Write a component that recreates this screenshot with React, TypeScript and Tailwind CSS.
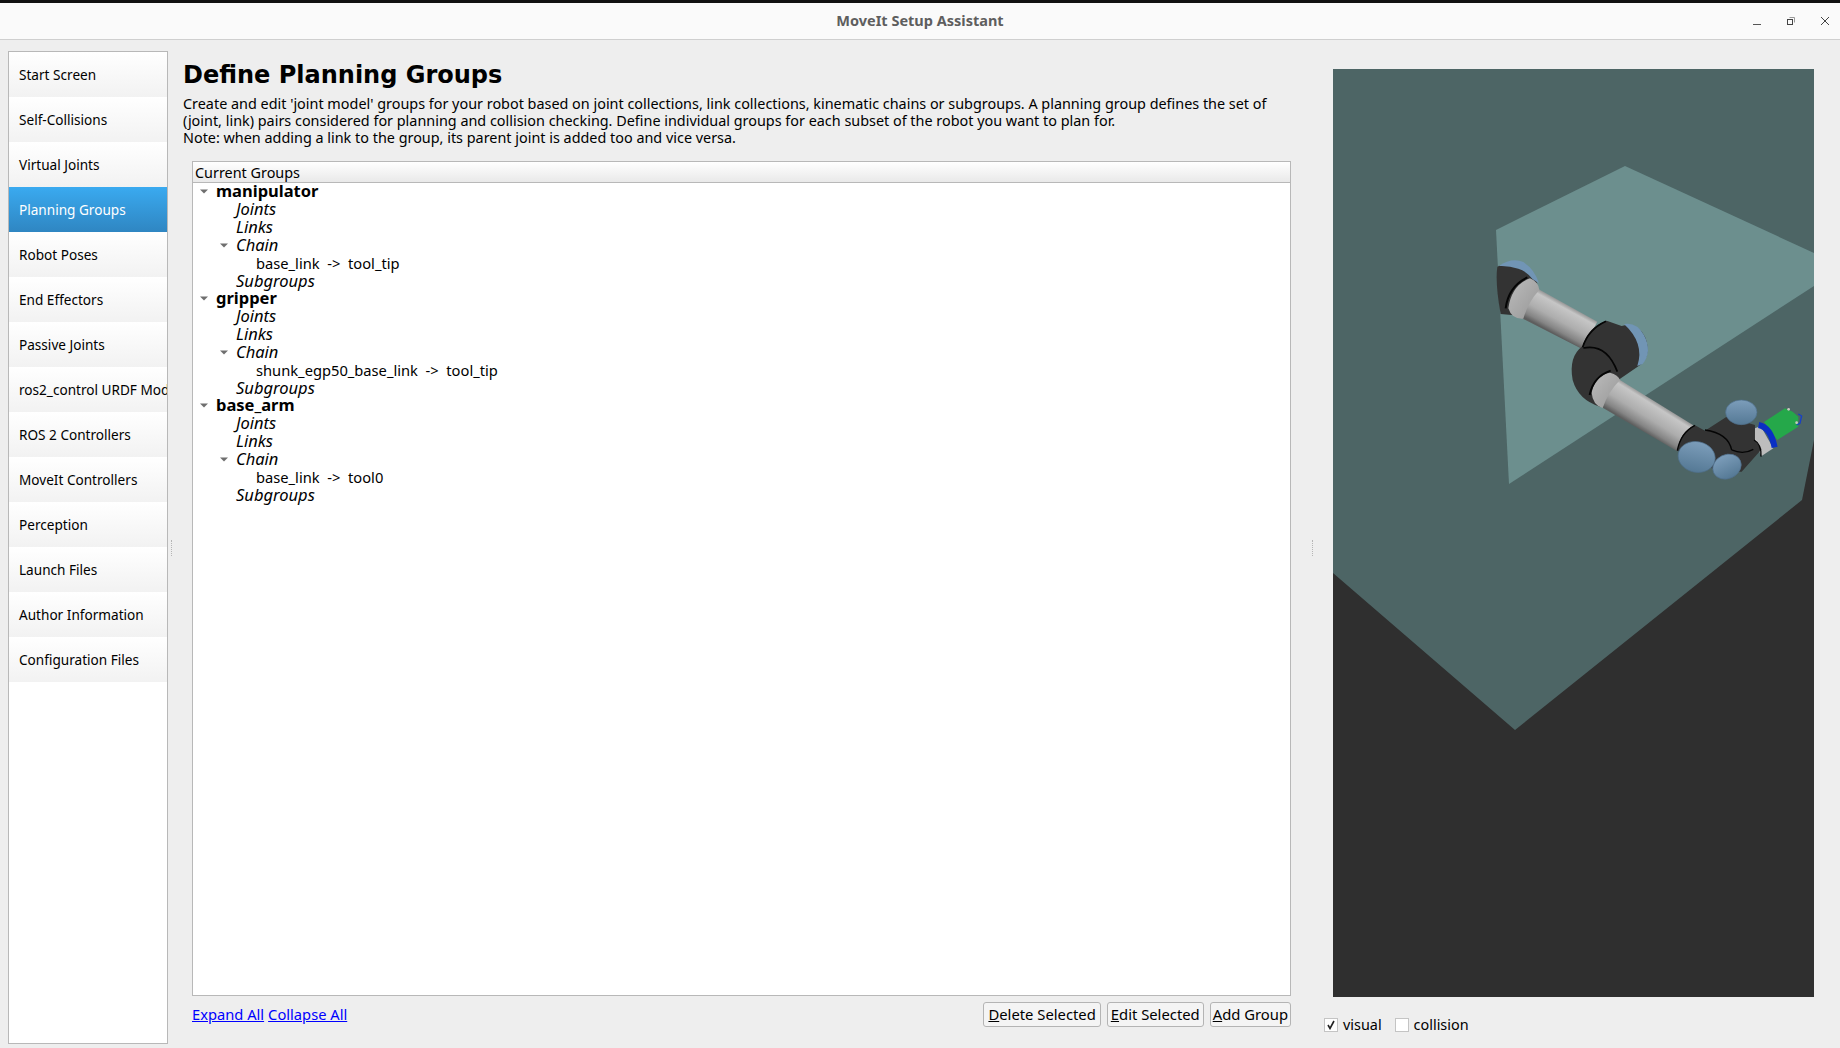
const NAV_ITEMS = [
  "Start Screen",
  "Self-Collisions",
  "Virtual Joints",
  "Planning Groups",
  "Robot Poses",
  "End Effectors",
  "Passive Joints",
  "ros2_control URDF Modules",
  "ROS 2 Controllers",
  "MoveIt Controllers",
  "Perception",
  "Launch Files",
  "Author Information",
  "Configuration Files",
];

const GROUPS = [
  { name: "manipulator", chain: "base_link  ->  tool_tip" },
  { name: "gripper", chain: "shunk_egp50_base_link  ->  tool_tip" },
  { name: "base_arm", chain: "base_link  ->  tool0" },
];

function Arrow() {
  return (
    <svg width="8" height="5" viewBox="0 0 8 5" className="shrink-0">
      <path d="M0 0.5 L8 0.5 L4 4.5 Z" fill="#6f6f6f" />
    </svg>
  );
}

function Splitter() {
  return (
    <div className="flex h-full items-center">
      <div className="h-[16px] w-0 border-l border-dotted border-[#b5b5b5]" />
    </div>
  );
}

function Group({ name, chain }: { name: string; chain: string }) {
  return (
    <div>
      <div className="flex h-[18px] items-center">
        <div className="ml-[7px] w-[16px]">
          <Arrow />
        </div>
        <span className="text-[16.5px] font-bold leading-[18px] text-black">{name}</span>
      </div>
      <div className="ml-[43px] h-[18px] text-[16.5px] italic leading-[18px]">Joints</div>
      <div className="ml-[43px] h-[18px] text-[16.5px] italic leading-[18px]">Links</div>
      <div className="flex h-[18px] items-center">
        <div className="ml-[27px] w-[16px]">
          <Arrow />
        </div>
        <span className="text-[16.5px] italic leading-[18px]">Chain</span>
      </div>
      <div className="ml-[63px] h-[18px] whitespace-pre text-[14.7px] leading-[18px]">{chain}</div>
      <div className="ml-[43px] h-[17px] text-[16.5px] italic leading-[17px]">Subgroups</div>
    </div>
  );
}

function Scene() {
  return (
    <svg viewBox="0 0 481 928" className="h-full w-full">
      <defs>
        <linearGradient id="armA" gradientUnits="userSpaceOnUse" x1="385" y1="198" x2="340" y2="280">
          <stop offset="0" stopColor="#9a9a9a" />
          <stop offset="0.12" stopColor="#c6c6c6" />
          <stop offset="0.55" stopColor="#adadad" />
          <stop offset="0.85" stopColor="#858585" />
          <stop offset="1" stopColor="#5e5e5e" />
        </linearGradient>
        <linearGradient id="armB" gradientUnits="userSpaceOnUse" x1="650" y1="488" x2="600" y2="568">
          <stop offset="0" stopColor="#9a9a9a" />
          <stop offset="0.12" stopColor="#c6c6c6" />
          <stop offset="0.55" stopColor="#adadad" />
          <stop offset="0.85" stopColor="#858585" />
          <stop offset="1" stopColor="#5e5e5e" />
        </linearGradient>
        <linearGradient id="collar" x1="0" y1="0" x2="1" y2="1">
          <stop offset="0" stopColor="#bcbcbc" />
          <stop offset="1" stopColor="#979797" />
        </linearGradient>
        <linearGradient id="cap" x1="0" y1="0" x2="0" y2="1">
          <stop offset="0" stopColor="#7c9dba" />
          <stop offset="1" stopColor="#557995" />
        </linearGradient>
      </defs>
      <rect width="481" height="928" fill="#4d6565" />
      <polygon points="0,504 182,661 469,431 481,371 481,928 0,928" fill="#2f2f2f" />
      <polygon points="163,161 292,97 481,184 481,217 176,415" fill="#6c8f8e" />
      <g transform="translate(107 171) scale(0.3333)">
        {/* shoulder */}
        <path d="M172 80 Q205 62 245 75 Q280 95 292 130 L215 225 L182 222 Q165 130 172 80Z" fill="#333" />
        <path d="M176 78 Q215 52 250 66 Q284 88 297 130 L278 118 Q258 92 235 86 Q205 76 176 78Z" fill="#7195b5" />
        <polygon points="262,128 300,150 472,245 428,328 248,236" fill="url(#armA)" />
        <path d="M205 205 Q215 135 270 115 Q295 125 298 150 Q265 185 250 236 Q215 238 205 205Z" fill="url(#collar)" />
        <path d="M197 205 Q205 140 262 112" fill="none" stroke="#050505" strokeWidth="6" />
        {/* elbow */}
        <path d="M428 318 Q445 260 500 242 L545 258 Q590 245 615 290 Q635 340 605 372 L535 420 L480 500 Q415 480 398 420 Q385 350 428 318Z" fill="#333" />
        <path d="M552 252 Q590 245 612 285 Q638 335 608 372 L592 378 Q615 310 552 252Z" fill="#7195b5" />
        <path d="M428 322 Q445 268 498 244" fill="none" stroke="#050505" strokeWidth="5" />
        <path d="M430 324 Q500 310 532 395" fill="none" stroke="#050505" strokeWidth="5" />
        {/* forearm */}
        <polygon points="510,418 540,420 760,556 712,634 488,503" fill="url(#armB)" />
        <path d="M455 458 Q465 405 510 398 Q535 405 540 420 Q505 455 488 504 Q458 495 455 458Z" fill="url(#collar)" />
        <path d="M449 465 Q460 410 512 392" fill="none" stroke="#050505" strokeWidth="6" />
        {/* wrist */}
        <polygon points="945,565 962,558 1000,625 965,648 940,600" fill="#bdbdbd" />
        <path d="M712 632 Q720 575 765 556 L795 572 L860 530 L945 555 L945 600 L965 628 L905 695 L830 695 L770 650Z" fill="#333" />
        <path d="M712 632 Q722 578 765 556 M795 570 Q865 580 875 630 M875 630 Q910 645 940 628 M942 600 Q965 612 963 650" fill="none" stroke="#050505" strokeWidth="4" />
        <ellipse cx="904" cy="517" rx="47" ry="37" fill="url(#cap)" stroke="#4f6f8c" strokeWidth="2" />
        <ellipse cx="861" cy="680" rx="44" ry="36" transform="rotate(-25 861 680)" fill="url(#cap)" stroke="#4f6f8c" strokeWidth="2" />
        <ellipse cx="770" cy="651" rx="56" ry="46" transform="rotate(12 770 651)" fill="url(#cap)" stroke="#4f6f8c" strokeWidth="2" />
        {/* gripper */}
        <polygon points="972,546 1035,505 1058,515 1075,530 1075,560 1012,600" fill="#25a84a" />
        <path d="M956 555 Q992 562 1004 622" fill="none" stroke="#0a2fc4" strokeWidth="18" />
        <path d="M1075 522 L1085 528 L1080 550 L1070 555" fill="none" stroke="#1740c8" strokeWidth="4" />
        <circle cx="1046" cy="508" r="4" fill="#c9c9c0" />
        <circle cx="1070" cy="548" r="4" fill="#c9c9c0" />
      </g>
    </svg>
  );
}

export default function App() {
  return (
    <div className="flex h-[1048px] w-[1840px] flex-col overflow-hidden bg-[#eeeeee] font-['Noto_Sans',sans-serif] text-[14.4px] text-black">
      <div className="h-[3px] bg-[#111111]" />
      {/* title bar */}
      <div className="relative flex h-[37px] items-center justify-center border-b border-[#cfcfcf] bg-[#fafafa]">
        <span className="text-[14.5px] font-bold text-[#5e5e5e]">MoveIt Setup Assistant</span>
        <div className="absolute right-[11px] top-[14px] flex items-center gap-[26px]">
          <svg width="8" height="8" viewBox="0 0 8 8">
            <path d="M0 7.5 H8" stroke="#555" strokeWidth="1" />
          </svg>
          <svg width="8" height="8" viewBox="0 0 8 8" fill="none">
            <rect x="0.5" y="2.5" width="5" height="5" stroke="#444" />
            <path d="M2.5 0.5 H7.5 V5.5" stroke="#999" />
          </svg>
          <svg width="8" height="8" viewBox="0 0 8 8" fill="none">
            <path d="M0 0 L8 8 M8 0 L0 8" stroke="#444" strokeWidth="1" />
          </svg>
        </div>
      </div>

      <div className="flex flex-1 pb-[4px] pl-[8px] pt-[11px]">
        {/* sidebar */}
        <div className="w-[160px] overflow-hidden border border-[#b8b8b8] bg-white text-[13.6px]">
          {NAV_ITEMS.map((item) => (
            <div
              key={item}
              className={
                item === "Planning Groups"
                  ? "flex h-[45px] items-center whitespace-nowrap bg-gradient-to-b from-[#3aaaf0] to-[#2f86c2] pl-[10px] pt-[1px] text-white"
                  : "flex h-[45px] items-center whitespace-nowrap bg-gradient-to-b from-white to-[#f2f2f2] pl-[10px] pt-[1px]"
              }
            >
              {item}
            </div>
          ))}
        </div>
        <div className="w-[15px] pl-[3px]">
          <Splitter />
        </div>

        {/* main */}
        <div className="flex w-[1108px] flex-col pb-[17px]">
          <h1 className="mt-[12px] h-[32px] font-['DejaVu_Sans',sans-serif] text-[24px] font-bold leading-[24px]">
            Define Planning Groups
          </h1>
          <p className="leading-[17px]">
            Create and edit 'joint model' groups for your robot based on joint collections, link collections, kinematic chains or subgroups. A planning group defines the set of
            <br />
            (joint, link) pairs considered for planning and collision checking. Define individual groups for each subset of the robot you want to plan for.
            <br />
            Note: when adding a link to the group, its parent joint is added too and vice versa.
          </p>
          <div className="ml-[9px] mt-[15px] flex flex-1 flex-col border border-[#b8b8b8] bg-white">
            <div className="h-[21px] border-b border-[#b8b8b8] bg-gradient-to-b from-white to-[#e9e9e9] pl-[2px] leading-[21px]">
              Current Groups
            </div>
            <div className="-mt-[1px] flex-1">
              {GROUPS.map((g) => (
                <Group key={g.name} name={g.name} chain={g.chain} />
              ))}
            </div>
          </div>
          <div className="ml-[9px] mt-[6px] flex h-[25px] items-center justify-between">
            <div className="flex gap-[4px] text-[14.7px] text-[#0000ff] underline">
              <span>Expand All</span>
              <span>Collapse All</span>
            </div>
            <div className="flex gap-[6px] text-[14.8px]">
              <button className="h-[25px] rounded-[3px] border border-[#b4b4b4] bg-[#f4f4f4] px-[4px]">
                <span className="underline">D</span>elete Selected
              </button>
              <button className="h-[25px] rounded-[3px] border border-[#b4b4b4] bg-[#f4f4f4] px-[3px]">
                <span className="underline">E</span>dit Selected
              </button>
              <button className="h-[25px] rounded-[3px] border border-[#b4b4b4] bg-[#f4f4f4] px-[2px]">
                <span className="underline">A</span>dd Group
              </button>
            </div>
          </div>
        </div>
        <div className="w-[42px] pl-[21px]">
          <Splitter />
        </div>

        {/* viewer */}
        <div className="flex w-[481px] flex-col pt-[18px]">
          <div className="h-[928px] w-[481px]">
            <Scene />
          </div>
          <div className="ml-[-9px] mt-[17px] flex items-center">
            <div className="flex h-[14px] w-[14px] items-center justify-center border border-[#c4c4c4] bg-white">
              <svg width="10" height="10" viewBox="0 0 10 10" fill="none">
                <path d="M2 5 L4 8.5 L8 1" stroke="#222" strokeWidth="1.6" />
              </svg>
            </div>
            <span className="ml-[5px]">visual</span>
            <div className="ml-[13px] h-[14px] w-[14px] border border-[#c4c4c4] bg-white" />
            <span className="ml-[5px]">collision</span>
          </div>
        </div>
      </div>
    </div>
  );
}
